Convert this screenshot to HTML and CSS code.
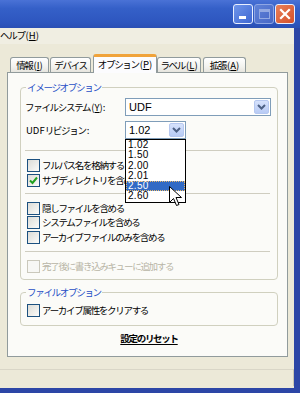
FILE: index.html
```html
<!DOCTYPE HTML>
<html>
	<head>
		<meta charset="utf-8">
		<link rel="stylesheet" href="styles.css">
	</head>
	<body>
		<div class="window">
			<div class="titlebar">
				<span class="tb-btn tb-min"><i></i></span>
				<span class="tb-btn tb-max"><i></i></span>
				<span class="tb-btn tb-close">
					<svg width="12" height="12" viewBox="0 0 12 12"><path d="M2 2 L10 10 M10 2 L2 10" stroke="#fff" stroke-width="2.2" stroke-linecap="square"/></svg>
				</span>
			</div>
			<div class="frame">
				<div class="menubar">ヘルプ<span class="lat">(<u>H</u>)</span></div>
				<div class="content">
					<div class="tabs">
						<div class="tab t1">情報<span class="lat">(<u>I</u>)</span></div>
						<div class="tab t2">デバイス</div>
						<div class="tab t3 active">オプション<span class="lat">(<u>P</u>)</span></div>
						<div class="tab t4">ラベル<span class="lat">(<u>L</u>)</span></div>
						<div class="tab t5">拡張<span class="lat">(<u>A</u>)</span></div>
					</div>
					<div class="panel">
						<fieldset class="group g1">
							<legend>イメージオプション</legend>
							<div class="field">
								<span class="lbl">ファイルシステム<span class="lat">(<u>Y</u>):</span></span>
								<div class="select wide"><span class="val">UDF</span><span class="drop"><svg width="9" height="6" viewBox="0 0 9 6"><path d="M1 1 L4.5 4.5 L8 1" fill="none" stroke="#4d6185" stroke-width="2"/></svg></span></div>
							</div>
							<div class="field second">
								<span class="lbl"><span class="lat">UDF</span>リビジョン<span class="lat">:</span></span>
								<div class="select narrow"><span class="val">1.02</span><span class="drop"><svg width="9" height="6" viewBox="0 0 9 6"><path d="M1 1 L4.5 4.5 L8 1" fill="none" stroke="#4d6185" stroke-width="2"/></svg></span></div>
							</div>
							<div class="sep s1"></div>
							<div class="checks c1">
								<div class="check"><span class="box"></span>フルパス名を格納する</div>
								<div class="check"><span class="box on"><svg width="9" height="9" viewBox="0 0 9 9"><path d="M1 4.5 L3.5 7 L8 1.5" fill="none" stroke="#21a121" stroke-width="2"/></svg></span>サブディレクトリを含める</div>
							</div>
							<div class="sep s2"></div>
							<div class="checks c2">
								<div class="check"><span class="box"></span>隠しファイルを含める</div>
								<div class="check"><span class="box"></span>システムファイルを含める</div>
								<div class="check"><span class="box"></span>アーカイブファイルのみを含める</div>
							</div>
							<div class="sep s3"></div>
							<div class="check disabled"><span class="box"></span>完了後に書き込みキューに追加する</div>
						</fieldset>
						<fieldset class="group g2">
							<legend>ファイルオプション</legend>
							<div class="check"><span class="box"></span>アーカイブ属性をクリアする</div>
						</fieldset>
						<div class="reset"><span>設定のリセット</span></div>
					</div>
					<div class="status"></div>
				</div>
			</div>

			<ul class="droplist">
				<li>1.02</li>
				<li>1.50</li>
				<li>2.00</li>
				<li>2.01</li>
				<li class="sel">2.50</li>
				<li>2.60</li>
			</ul>
			<svg class="cursor" width="13" height="21" viewBox="0 0 13 21">
				<path d="M0.5 0.5 L0.5 16.5 L4.5 12.5 L7.5 19.5 L10 18.5 L7 11.5 L12.5 11.5 Z" fill="#fff" stroke="#000" stroke-width="1"/>
			</svg>
		</div>
	</body>
</html>
```

FILE: styles.css
```css
* {
	box-sizing: border-box;
}

html, body {
	margin: 0;
	padding: 0;
}

body {
	width: 300px;
	height: 393px;
	overflow: hidden;
	font-family: "Noto Sans CJK JP", sans-serif;
	font-size: 9.5px;
	letter-spacing: -1.3px;
	line-height: 13px;
	color: #000;
}

.lat {
	letter-spacing: 0;
	padding-left: 1px;
}

u {
	text-decoration: underline;
	text-underline-offset: 1px;
}

.window {
	position: relative;
	width: 300px;
	height: 393px;
	background: #2c46a6;
}

.titlebar {
	height: 28px;
	display: flex;
	justify-content: flex-end;
	align-items: flex-start;
	gap: 1px;
	padding: 4px 5px 0 0;
	background: linear-gradient(#4a72d6, #3560c8 30%, #2d56bf 80%, #2a4fb4);
}

.tb-btn {
	width: 20px;
	height: 20px;
	border: 1px solid #e9efff;
	border-radius: 3px;
	display: flex;
	align-items: center;
	justify-content: center;
	position: relative;
}

.tb-min {
	background: linear-gradient(135deg, #6f95ea, #3e67d2);
}

.tb-min i {
	position: absolute;
	left: 5px;
	bottom: 4px;
	width: 7px;
	height: 3px;
	background: #fff;
}

.tb-max {
	background: linear-gradient(135deg, #5f82d8, #4767c6);
	border-color: #8ea6e4;
}

.tb-max i {
	width: 11px;
	height: 10px;
	border: 1px solid #93a9e2;
	border-top-width: 3px;
}

.tb-close {
	background: linear-gradient(135deg, #e8805a, #d5502a);
}

.frame {
	height: 365px;
	background: #ece9d8;
	margin-right: 6px;
	border-bottom: 5px solid #2c46a6;
}

.menubar {
	height: 16px;
	line-height: 15px;
	background: #f0eee2;
}

.content {
	padding: 10px 0 0 7px;
}

.tabs {
	display: flex;
	align-items: flex-end;
	height: 18px;
	padding-left: 3px;
	position: relative;
	z-index: 2;
}

.tab {
	height: 15px;
	line-height: 14px;
	text-align: center;
	border: 1px solid #919b9c;
	border-bottom: none;
	border-radius: 3px 3px 0 0;
	background: linear-gradient(#ffffff, #f3f3ef 60%, #e6e5de);
	white-space: nowrap;
}

.t1 { width: 39px; }
.t2 { width: 41px; margin-left: 1px; }
.t3 { width: 64px; margin-left: 2px; }
.t4 { width: 44px; }
.t5 { width: 43px; margin-left: 2px; }

.tab.active {
	height: 19px;
	line-height: 15px;
	margin-bottom: -1px;
	background: #fcfcfe;
	border-top: 3px solid #f0a33a;
}

.panel {
	width: 281px;
	height: 285px;
	border: 1px solid #919b9c;
	background: #fbfbf8;
	padding: 8px 0 0 12px;
	position: relative;
	z-index: 1;
}

.group {
	margin: 0;
	width: 258px;
	border: 1px solid #d0d0bf;
	border-radius: 4px;
	padding: 0 0 0 4px;
}

.group legend {
	color: #1f4fc6;
	line-height: 13px;
	padding: 0 1px;
	margin-left: 1px;
}

.g1 {
	padding-top: 4px;
	padding-bottom: 5px;
}

.field {
	display: flex;
	align-items: center;
	height: 18px;
}

.field.second {
	margin-top: 5px;
}

.lbl {
	width: 100px;
	white-space: nowrap;
}

.select {
	height: 18px;
	border: 1px solid #7f9db9;
	background: #fff;
	display: flex;
	align-items: center;
	justify-content: space-between;
	padding: 0 1px 0 3px;
	font-family: "Liberation Sans", sans-serif;
	font-size: 11px;
	letter-spacing: 0;
}

.wide {
	width: 146px;
}

.narrow {
	width: 61px;
}

.drop {
	width: 15px;
	height: 14px;
	border-radius: 2px;
	background: linear-gradient(#d6e2fc, #b8cbf5);
	border: 1px solid #b6c8f0;
	display: flex;
	align-items: center;
	justify-content: center;
}

.sep {
	height: 1px;
	background: #cfcdc0;
	width: 245px;
}

.s1 { margin-top: 11px; }
.s2 { margin-top: 5px; }
.s3 { margin-top: 6px; }

.check {
	display: flex;
	align-items: center;
	height: 15px;
	padding-left: 2px;
	white-space: nowrap;
}

.c1 {
	margin-top: 7px;
}

.c2 {
	margin-top: 7px;
}

.c2 .check {
	height: 14.5px;
}

.check.disabled {
	margin-top: 7px;
	color: #b8b5a6;
}

.box {
	width: 13px;
	height: 13px;
	border: 1px solid #1c5180;
	background: linear-gradient(135deg, #dcdcd7, #fbfbf9);
	margin-right: 2px;
	flex: none;
	display: flex;
	align-items: center;
	justify-content: center;
}

.disabled .box {
	border-color: #cac8bb;
	background: #f7f7f4;
}

.g2 {
	margin-top: 6px;
	padding-top: 4px;
	padding-bottom: 7px;
}

.reset {
	width: 258px;
	text-align: center;
	margin-top: 6px;
	line-height: 13px;
	font-weight: bold;
}

.reset span {
	text-decoration: underline;
	text-underline-offset: 2px;
}

.status {
	height: 17px;
	margin: 12px 0 0 -7px;
	border-top: 1px solid #d9d6c7;
	border-right: 1px solid #c8c5b4;
}

.droplist {
	position: absolute;
	left: 125px;
	top: 139px;
	width: 61px;
	margin: 0;
	padding: 0;
	list-style: none;
	background: #fff;
	border: 1px solid #000;
	font-family: "Liberation Sans", sans-serif;
	font-size: 10px;
	letter-spacing: 0.3px;
	z-index: 5;
}

.droplist li {
	height: 10.3px;
	line-height: 10.3px;
	padding-left: 2px;
}

.droplist li.sel {
	background: #316ac5;
	color: #fff;
	outline: 1px dotted #e8b86a;
	outline-offset: -1px;
}

.cursor {
	position: absolute;
	left: 169px;
	top: 186px;
	z-index: 6;
}
```
